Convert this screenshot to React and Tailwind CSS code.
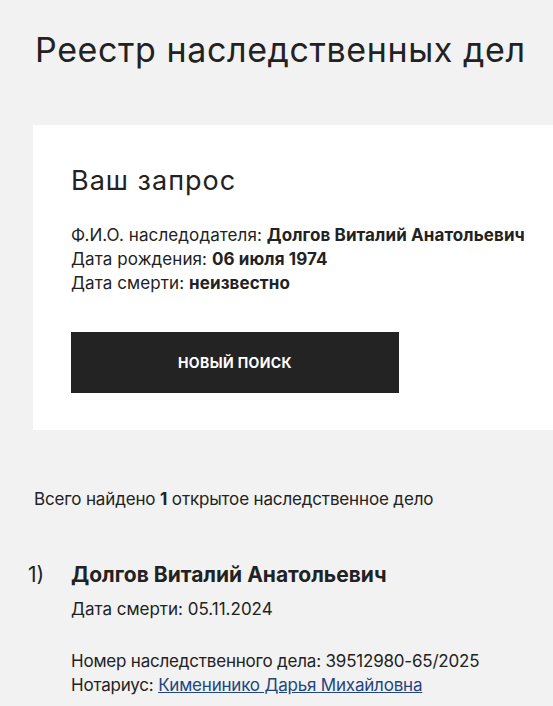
import React from 'react';

export default function App() {
    return (
        <div className="min-h-[706px] bg-[#f2f2f2] text-[#222] font-['Inter','Liberation_Sans',Arial,sans-serif] overflow-hidden">
            <h1 className="pl-[35px] pt-[30px] text-[34px] leading-[40px] tracking-[0.6px] whitespace-nowrap">Реестр наследственных дел</h1>

            <div className="ml-[33px] mt-[55px] bg-white pl-[38px] pt-[41px] pb-[37px]">
                <h2 className="text-[27px] leading-[30px] tracking-[1px]">Ваш запрос</h2>
                <div className="mt-[27px] text-[17px] leading-[24px] tracking-[0.1px] whitespace-nowrap">
                    <p>Ф.И.О. наследодателя: <b>Долгов Виталий Анатольевич</b></p>
                    <p>Дата рождения: <b>06 июля 1974</b></p>
                    <p>Дата смерти: <b>неизвестно</b></p>
                </div>
                <button className="mt-[37px] w-[328px] h-[61px] bg-[#232323] text-white text-[14px] font-bold uppercase tracking-[0.4px]">
                    Новый поиск
                </button>
            </div>

            <p className="pl-[34px] mt-[57px] text-[17px] leading-[24px] tracking-[-0.15px] whitespace-nowrap">
                Всего найдено <b>1</b> открытое наследственное дело
            </p>

            <div className="flex mt-[50px] pl-[28px]">
                <span className="w-[43px] text-[21px] leading-[28px]">1)</span>
                <div className="whitespace-nowrap">
                    <h3 className="text-[21px] leading-[28px] font-bold">Долгов Виталий Анатольевич</h3>
                    <p className="mt-[8px] text-[17px] leading-[24px]">Дата смерти: 05.11.2024</p>
                    <div className="mt-[28px] text-[17px] leading-[24px] tracking-[-0.2px]">
                        <p>Номер наследственного дела: 39512980-65/2025</p>
                        <p>Нотариус: <a href="#" className="text-[#23457e] underline">Кименинико Дарья Михайловна</a></p>
                    </div>
                </div>
            </div>
        </div>
    );
}
